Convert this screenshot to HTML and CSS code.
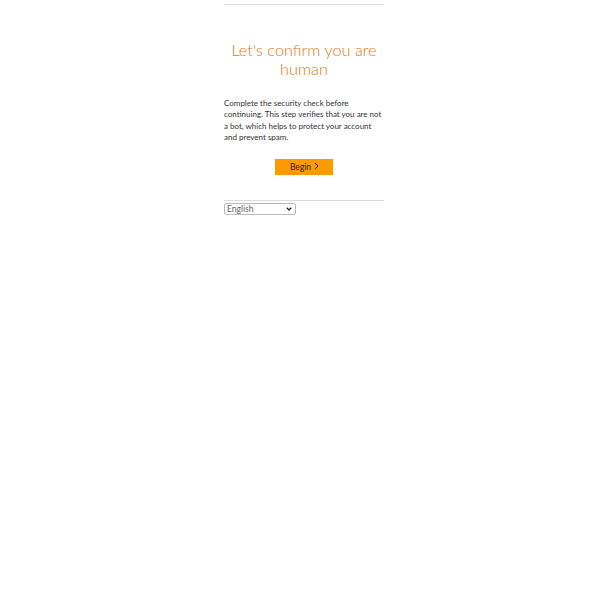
FILE: index.html
```html
<!DOCTYPE html>
<html>
<head>
<meta charset="utf-8">
<link rel="stylesheet" href="styles.css">
</head>
<body>
<div class="page">
  <hr class="rule">
  <h1 class="title">Let's confirm you are human</h1>
  <p class="text">Complete the security check before continuing. This step verifies that you are not a bot, which helps to protect your account and prevent spam.</p>
  <div class="actions">
    <button class="begin">Begin <svg class="chev" width="5" height="8" viewBox="0 0 5 8"><path d="M1 1 L4 4 L1 7" fill="none" stroke="#222" stroke-width="1"/></svg></button>
  </div>
  <hr class="rule rule-bottom">
  <div class="lang">
    <span class="lang-text">English</span>
    <svg class="lang-arrow" width="6" height="4" viewBox="0 0 6 4"><path d="M0.8 0.8 L3 3 L5.2 0.8" fill="none" stroke="#222" stroke-width="1.3"/></svg>
  </div>
</div>
</body>
</html>
```
FILE: styles.css
```css
html, body { margin: 0; padding: 0; background: #fff; }
body { font-family: Lato, "Noto Sans", sans-serif; padding-left: 8px; }
.page { width: 160px; margin: 0 auto; padding-top: 4px; }
.rule { border: 0; border-top: 1px solid #ddd; margin: 0; }
.title {
  margin: 35px 0 0;
  font-weight: 300;
  font-size: 16.3px;
  line-height: 19px;
  color: #e47911;
  text-align: center;
}
.text {
  margin: 20px 0 0;
  font-size: 8px;
  line-height: 11.4px;
  color: #333;
}
.actions { display: flex; justify-content: center; margin-top: 15px; }
.begin {
  width: 58px; height: 16px;
  background: #ff9900; border: 0; padding: 0 0 0 1px;
  font-family: inherit; font-size: 8.5px; color: #222;
  display: flex; align-items: center; justify-content: center; gap: 3px;
}
.chev { margin-top: -2px; }
.rule-bottom { margin-top: 25px; }
.lang {
  margin-top: 2px;
  width: 72px; height: 12px;
  box-sizing: border-box;
  border: 1px solid #bbb; border-radius: 2px; background: #fff;
  display: flex; align-items: center; justify-content: space-between;
  padding: 0 3px 0 2px;
  font-size: 8.5px; color: #666;
}
.lang-arrow { display: block; }
```
